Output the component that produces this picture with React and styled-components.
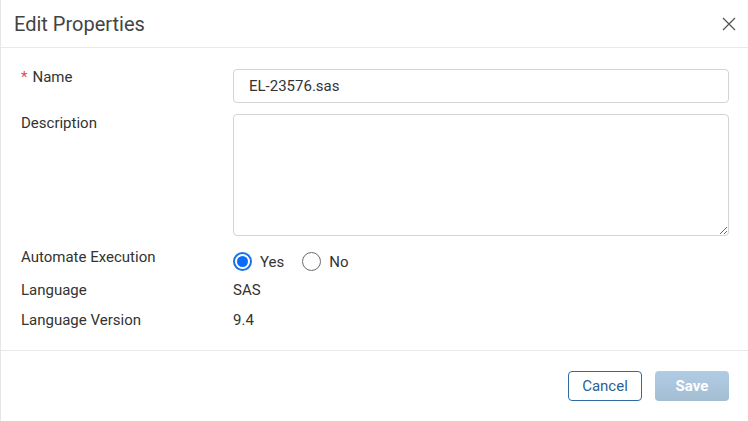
import React, { useState } from "react";
import styled, { createGlobalStyle } from "styled-components";

const Global = createGlobalStyle`
  html, body {
    margin: 0;
    padding: 0;
    background: #fff;
  }
  body {
    font-family: Roboto, "Liberation Sans", Arial, sans-serif;
  }
`;

const Dialog = styled.div`
  width: 748px;
  height: 421px;
  box-sizing: border-box;
  border-left: 1px solid #e6e6e6;
  background: #fff;
  display: flex;
  flex-direction: column;
`;

const Header = styled.div`
  height: 48px;
  box-sizing: border-box;
  border-bottom: 1px solid #e9e9e9;
  display: flex;
  align-items: center;
  justify-content: space-between;
  padding: 0 12px 0 13px;
`;

const Title = styled.h2`
  margin: 0;
  font-size: 20px;
  font-weight: 400;
  color: #444;
`;

const Close = styled.button`
  border: 0;
  background: none;
  padding: 0;
  width: 14px;
  height: 14px;
  display: flex;
  cursor: pointer;
`;

const Body = styled.div`
  flex: 1;
  border-bottom: 1px solid #e9e9e9;
  padding: 21px 19px 0 20px;
  display: flex;
  flex-direction: column;
`;

const Row = styled.div`
  display: grid;
  grid-template-columns: 212px 1fr;
  align-items: start;
  margin-bottom: ${(p) => p.gap || 0}px;
`;

const Label = styled.div`
  font-size: 15px;
  color: #333;
  padding-top: ${(p) => p.top || 0}px;
  line-height: 17px;
`;

const Star = styled.span`
  color: #e5484d;
  margin-right: 5px;
`;

const Input = styled.input`
  height: 34px;
  box-sizing: border-box;
  border: 1px solid #d4d4d4;
  border-radius: 4px;
  padding: 0 15px;
  font-family: inherit;
  font-size: 15px;
  color: #333;
  outline: none;
`;

const TextArea = styled.textarea`
  height: 122px;
  box-sizing: border-box;
  border: 1px solid #d4d4d4;
  border-radius: 4px;
  padding: 8px 15px;
  font-family: inherit;
  font-size: 15px;
  resize: vertical;
  outline: none;
`;

const Value = styled.div`
  font-size: 15px;
  color: #333;
  line-height: 17px;
`;

const Radios = styled.div`
  display: flex;
  align-items: center;
  gap: 18px;
  padding-top: 3px;
`;

const RadioLabel = styled.label`
  display: flex;
  align-items: center;
  gap: 8px;
  font-size: 15px;
  color: #333;
  cursor: pointer;
`;

const Circle = styled.span`
  width: 19px;
  height: 19px;
  box-sizing: border-box;
  border-radius: 50%;
  border: ${(p) => (p.on ? "2px solid #1a73e8" : "1px solid #6b6b6b")};
  display: flex;
  align-items: center;
  justify-content: center;
  &::after {
    content: "";
    width: 11px;
    height: 11px;
    border-radius: 50%;
    background: ${(p) => (p.on ? "#0b6cf5" : "transparent")};
  }
`;

const Footer = styled.div`
  height: 70px;
  display: flex;
  align-items: center;
  justify-content: flex-end;
  gap: 13px;
  padding: 0 19px 0 0;
`;

const Button = styled.button`
  width: 74px;
  height: 30px;
  border-radius: 4px;
  font-family: inherit;
  font-size: 15px;
  cursor: pointer;
  border: ${(p) => (p.primary ? "0" : "1px solid #2f6aa3")};
  background: ${(p) =>
    p.primary ? "linear-gradient(#b0cce4, #a4bdd3)" : "#fff"};
  color: ${(p) => (p.primary ? "#fff" : "#2c5f95")};
  font-weight: ${(p) => (p.primary ? 700 : 400)};
`;

export default function App() {
  const [auto, setAuto] = useState(true);
  return (
    <>
      <Global />
      <Dialog>
        <Header>
          <Title>Edit Properties</Title>
          <Close aria-label="close">
            <svg width="14" height="14" viewBox="0 0 14 14">
              <path d="M1 1 L13 13 M13 1 L1 13" stroke="#555" strokeWidth="1.3" />
            </svg>
          </Close>
        </Header>
        <Body>
          <Row gap={11}>
            <Label top={0}>
              <Star>*</Star>Name
            </Label>
            <Input defaultValue="EL-23576.sas" />
          </Row>
          <Row gap={13}>
            <Label top={1}>Description</Label>
            <TextArea />
          </Row>
          <Row gap={11}>
            <Label>Automate Execution</Label>
            <Radios>
              <RadioLabel onClick={() => setAuto(true)}>
                <Circle on={auto ? 1 : 0} />
                Yes
              </RadioLabel>
              <RadioLabel onClick={() => setAuto(false)}>
                <Circle on={!auto ? 1 : 0} />
                No
              </RadioLabel>
            </Radios>
          </Row>
          <Row gap={13}>
            <Label>Language</Label>
            <Value>SAS</Value>
          </Row>
          <Row>
            <Label>Language Version</Label>
            <Value>9.4</Value>
          </Row>
        </Body>
        <Footer>
          <Button>Cancel</Button>
          <Button primary>Save</Button>
        </Footer>
      </Dialog>
    </>
  );
}
